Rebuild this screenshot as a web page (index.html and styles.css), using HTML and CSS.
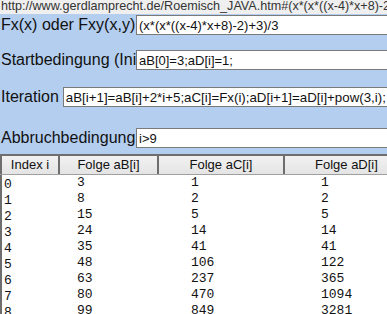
FILE: index.html
```html
<!DOCTYPE html>
<html lang="de">
<head>
    <meta charset="UTF-8">
    <title>Folgen berechnen</title>
    <link rel="stylesheet" href="styles.css">
</head>
<body>
    <div class="url">http://www.gerdlamprecht.de/Roemisch_JAVA.htm#(x*(x*((x-4)*x+8)-2)+3)/3</div>

    <div class="form">
        <div class="row row-fx">
            <span class="label">Fx(x) oder Fxy(x,y):</span>
            <input class="field" type="text" value="(x*(x*((x-4)*x+8)-2)+3)/3">
        </div>
        <div class="row row-start">
            <span class="label">Startbedingung (Initialisierung):</span>
            <input class="field" type="text" value="aB[0]=3;aD[i]=1;">
        </div>
        <div class="row row-iter">
            <span class="label label-auto">Iteration</span>
            <input class="field field-wide" type="text" value="aB[i+1]=aB[i]+2*i+5;aC[i]=Fx(i);aD[i+1]=aD[i]+pow(3,i);">
        </div>
        <div class="row row-stop">
            <span class="label">Abbruchbedingung:</span>
            <input class="field" type="text" value="i>9">
        </div>
    </div>

    <div class="table">
        <div class="head">
            <div class="th th-index">Index i</div>
            <div class="th th-b">Folge aB[i]</div>
            <div class="th th-c">Folge aC[i]</div>
            <div class="th th-d">Folge aD[i]</div>
        </div>
        <div class="body">
            <pre class="col col-index">0
1
2
3
4
5
6
7
8</pre>
            <pre class="col col-b">3
8
15
24
35
48
63
80
99</pre>
            <pre class="col col-c">1
2
5
14
41
106
237
470
849</pre>
            <pre class="col col-d">1
2
5
14
41
122
365
1094
3281</pre>
        </div>
    </div>
</body>
</html>
```

FILE: styles.css
```css
body {
    margin: 0;
    width: 387px;
    height: 314px;
    overflow: hidden;
    background-color: #b4cef0;
    font-family: 'Liberation Sans', Arial, sans-serif;
    color: #111;
}
.url {
    height: 14px;
    line-height: 13px;
    padding-left: 1px;
    font-size: 12.6px;
    color: #333;
    background-color: #efefef;
    white-space: nowrap;
    overflow: hidden;
}
.form {
    padding-top: 1px;
}
.row {
    display: flex;
    align-items: center;
    height: 20px;
}
.row-start {
    margin-top: 15px;
}
.row-iter {
    margin-top: 17px;
}
.row-stop {
    margin-top: 21px;
}
.label {
    flex: none;
    width: 135px;
    padding-left: 1px;
    font-size: 16px;
    white-space: nowrap;
    overflow: hidden;
}
.label-auto {
    width: auto;
    padding-right: 4px;
}
.field {
    flex: none;
    box-sizing: border-box;
    width: 300px;
    height: 20px;
    margin: 0;
    padding: 0 2px;
    border: 1px solid #7a7a7a;
    background: #fff;
    font-family: 'Liberation Sans', Arial, sans-serif;
    font-size: 13px;
    color: #111;
}
.field-wide {
    width: 360px;
    font-size: 13.3px;
}
.table {
    margin-top: 6px;
    width: 420px;
}
.head {
    display: grid;
    grid-template-columns: 58px 99px 126px 137px;
    border-top: 2px solid #6e6e6e;
    border-bottom: 1px solid #a0a0a0;
    background: linear-gradient(#f2f2f2, #e4e4e4);
}
.th {
    box-sizing: border-box;
    height: 18px;
    line-height: 18px;
    font-size: 13px;
    text-align: center;
    border-left: 2px solid #6e6e6e;
}
.th-d {
    text-align: left;
    padding-left: 30px;
}
.body {
    display: grid;
    grid-template-columns: 58px 99px 126px 137px;
    height: 200px;
    background: #fff;
    border-left: 2px solid #6e6e6e;
}
.col {
    margin: 0;
    padding-top: 0;
    font-family: 'Liberation Mono', 'Courier New', monospace;
    font-size: 13px;
    line-height: 16px;
    color: #111;
}
.col-index {
    padding-top: 2px;
    padding-left: 2px;
}
.col-b {
    padding-left: 17px;
}
.col-c {
    padding-left: 32px;
}
.col-d {
    padding-left: 36px;
}
```
